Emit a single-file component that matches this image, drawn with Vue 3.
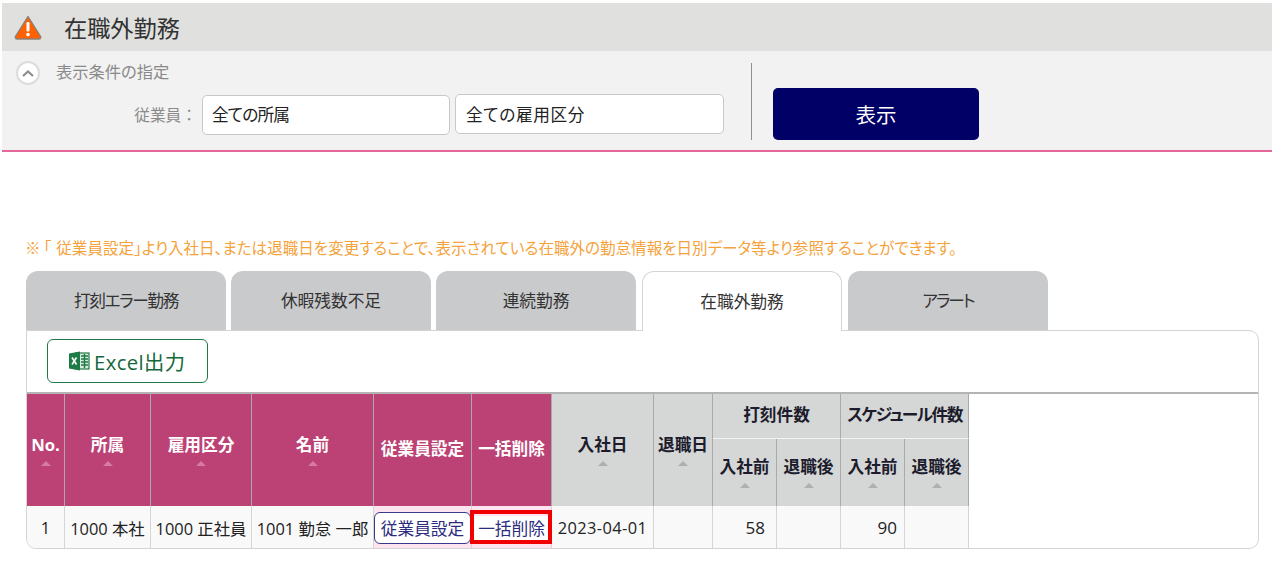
<script setup>
const tabs = [
  { label: '打刻エラー勤務', cls: 'tight' },
  { label: '休暇残数不足' },
  { label: '連続勤務' },
  { label: '在職外勤務', cls: 'active' },
  { label: 'アラート', cls: 'tighter' }
]
const pinkCols = ['No.', '所属', '雇用区分', '名前']
const subCols = ['入社前', '退職後', '入社前', '退職後']
</script>

<template>
  <div class="page">
    <header class="title-bar">
      <svg class="warn-icon" width="28" height="26" viewBox="0 0 28 26">
        <path d="M14 2.5 L26.6 22.5 Q27 25 24.8 25 L3.2 25 Q1 25 1.4 22.5 Z" fill="#ff6000" stroke="#8a8078" stroke-width="1.4" stroke-linejoin="round" />
        <rect x="12.5" y="8" width="3" height="9.5" rx="1.2" fill="#fff" />
        <circle cx="14" cy="20.6" r="1.8" fill="#fff" />
      </svg>
      <h1 class="title">在職外勤務</h1>
    </header>

    <section class="filter">
      <div class="filter-left">
        <div class="filter-head">
          <span class="collapse">
            <svg width="14" height="9" viewBox="0 0 14 9">
              <path d="M2 7 L7 2.5 L12 7" fill="none" stroke="#8d8d8d" stroke-width="2.2" />
            </svg>
          </span>
          <span class="filter-name">表示条件の指定</span>
        </div>
        <div class="filter-row">
          <span class="filter-label">従業員：</span>
          <div class="select select-a">全ての所属</div>
          <div class="select select-b">全ての雇用区分</div>
        </div>
      </div>
      <div class="divider"></div>
      <button class="show-btn">表示</button>
    </section>

    <p class="note"><span class="note-mark">※「</span>従業員設定」より入社日、または退職日を変更することで、表示されている在職外の勤怠情報を日別データ等より参照することができます。</p>

    <nav class="tabs">
      <div v-for="t in tabs" :key="t.label" class="tab" :class="t.cls">{{ t.label }}</div>
    </nav>

    <div class="panel">
      <button class="excel-btn">
        <svg width="22" height="20" viewBox="0 0 22 20">
          <rect x="8" y="2" width="13" height="16" fill="#d9ebdf" stroke="#1e7b45" stroke-width="1.2" />
          <path d="M13 5h7M13 8h7M13 11h7M13 14h7M16.5 3v14" stroke="#1e7b45" stroke-width="1.5" />
          <path d="M1 2.5 L12 0.5 V19.5 L1 17.5 Z" fill="#1e7b45" />
          <path d="M4 6.5 L8.5 13.5 M8.5 6.5 L4 13.5" stroke="#fff" stroke-width="1.6" />
        </svg>
        <span>Excel出力</span>
      </button>

      <div class="table-wrap">
        <table class="list">
          <colgroup>
            <col class="c1" /><col class="c2" /><col class="c3" /><col class="c4" /><col class="c5" /><col class="c6" />
            <col class="c7" /><col class="c8" /><col class="c9" /><col class="c9" /><col class="c9" /><col class="c9" />
          </colgroup>
          <thead>
            <tr class="row-top">
              <th v-for="c in pinkCols" :key="c" rowspan="2" class="pink">
                <div>{{ c }}</div>
                <i class="sort pink-sort"></i>
              </th>
              <th rowspan="2" class="pink">従業員設定</th>
              <th rowspan="2" class="pink">一括削除</th>
              <th rowspan="2" class="gray">
                <div>入社日</div>
                <i class="sort"></i>
              </th>
              <th rowspan="2" class="gray">
                <div>退職日</div>
                <i class="sort"></i>
              </th>
              <th colspan="2" class="gray group">打刻件数</th>
              <th colspan="2" class="gray group schedule">スケジュール件数</th>
            </tr>
            <tr class="row-sub">
              <th v-for="(c, i) in subCols" :key="i" class="gray">
                <div>{{ c }}</div>
                <i class="sort"></i>
              </th>
            </tr>
          </thead>
          <tbody>
            <tr class="row-body">
              <td class="center">1</td>
              <td class="center">1000 本社</td>
              <td class="center">1000 正社員</td>
              <td class="center">1001 勤怠 一郎</td>
              <td class="tint"><button class="link-btn">従業員設定</button></td>
              <td class="tint relative">
                <span class="plain-btn">一括削除</span>
                <span class="red-box"></span>
              </td>
              <td class="center date">2023-04-01</td>
              <td></td>
              <td class="num num-a">58</td>
              <td></td>
              <td class="num num-b">90</td>
              <td></td>
            </tr>
          </tbody>
        </table>
      </div>
    </div>
  </div>
</template>

<style>
body {
  margin: 0;
  background: #fff;
}
</style>

<style scoped>
.page {
  width: 1272px;
  height: 561px;
  overflow: hidden;
  font-family: "Open Sans", "Noto Sans CJK JP", sans-serif;
  font-feature-settings: "palt";
  color: #222;
  padding-top: 3px;
  box-sizing: border-box;
}

/* TITLE */
.title-bar {
  margin-left: 2px;
  height: 48px;
  background: #e0e0de;
  display: flex;
  align-items: center;
}
.warn-icon {
  margin-left: 12px;
}
.title {
  margin: 0 0 0 22px;
  font-size: 23.2px;
  font-weight: 400;
  color: #333;
}

/* FILTER */
.filter {
  margin-left: 2px;
  height: 99px;
  background: #f2f2f2;
  border-bottom: 2px solid #e4689a;
  display: flex;
  align-items: flex-start;
}
.filter-left {
  width: 749px;
}
.filter-head {
  display: flex;
  align-items: center;
  height: 24px;
  margin-top: 10px;
  padding-left: 14px;
}
.collapse {
  width: 20px;
  height: 20px;
  border: 2px solid #dcdcdc;
  border-radius: 50%;
  background: #fff;
  display: flex;
  align-items: center;
  justify-content: center;
}
.filter-name {
  margin: 0 0 4px 16px;
  font-size: 16.3px;
  color: #8a8a8a;
}
.filter-row {
  display: flex;
  align-items: center;
  margin-top: 9px;
}
.filter-label {
  width: 195px;
  text-align: right;
  font-feature-settings: normal;
  font-size: 15.7px;
  color: #8a8a8a;
}
.select {
  height: 40px;
  box-sizing: border-box;
  border: 1px solid #c8c8c8;
  border-radius: 5px;
  background: #fff;
  font-size: 16.7px;
  padding-left: 10px;
  color: #222;
}
.select-a {
  margin-left: 5px;
  width: 248px;
  margin-top: 1px;
  line-height: 38px;
  letter-spacing: -0.9px;
  padding-left: 9px;
}
.select-b {
  margin-left: 5px;
  width: 269px;
  margin-top: -1px;
  line-height: 40px;
  letter-spacing: 0.6px;
}
.divider {
  width: 1px;
  height: 77px;
  margin-top: 12px;
  background: #8f8f8f;
}
.show-btn {
  margin: 37px 0 0 21px;
  width: 206px;
  height: 52px;
  border: none;
  border-radius: 5px;
  background: #000066;
  color: #fff;
  font-family: inherit;
  font-feature-settings: inherit;
  font-size: 20.5px;
}

/* NOTE */
.note {
  margin: 84px 0 0 25px;
  height: 24px;
  line-height: 24px;
  font-size: 15.55px;
  color: #f5a23c;
  white-space: nowrap;
}
.note-mark {
  letter-spacing: 3px;
  margin-right: 2px;
}

/* TABS */
.tabs {
  display: flex;
  gap: 5px;
  margin: 11px 0 0 26px;
  height: 59px;
}
.tab {
  width: 200px;
  height: 59px;
  box-sizing: border-box;
  background: #c9cacc;
  border-radius: 12px 12px 0 0;
  text-align: center;
  font-size: 16.7px;
  line-height: 60px;
  color: #333;
}
.tab.tight {
  letter-spacing: -1.4px;
}
.tab.tighter {
  letter-spacing: -2px;
}
.tab.active {
  margin: 0 1px;
  height: 60px;
  background: #fff;
  border: 1px solid #d4d4d4;
  border-bottom: none;
  position: relative;
  z-index: 1;
}

/* PANEL */
.panel {
  margin-left: 26px;
  width: 1233px;
  height: 219px;
  box-sizing: border-box;
  background: #fff;
  border: 1px solid #d4d4d4;
  border-radius: 0 10px 10px 10px;
  overflow: hidden;
}
.excel-btn {
  display: flex;
  align-items: center;
  gap: 4px;
  width: 161px;
  height: 44px;
  box-sizing: border-box;
  margin: 8px 0 9px 20px;
  padding: 0 0 0 20px;
  background: #fff;
  border: 1px solid #1e7b45;
  border-radius: 6px;
  color: #14683a;
  font-family: inherit;
  font-feature-settings: inherit;
  font-size: 20.3px;
  letter-spacing: 0.4px;
}

/* TABLE */
.table-wrap {
  border-top: 2px solid #b4b4b4;
}
.list {
  border-collapse: separate;
  border-spacing: 0;
  table-layout: fixed;
  width: 942px;
}
.c1 { width: 38px; }
.c2 { width: 86px; }
.c3 { width: 101px; }
.c4 { width: 122px; }
.c5 { width: 98px; }
.c6 { width: 80px; }
.c7 { width: 102px; }
.c8 { width: 59px; }
.c9 { width: 64px; }

.row-top { height: 45px; }
.row-sub { height: 67px; }
.row-body { height: 43px; }

th {
  padding: 0 0 2px;
  box-sizing: border-box;
  font-size: 16.7px;
  font-weight: 700;
  text-align: center;
  vertical-align: middle;
  white-space: nowrap;
  line-height: 24px;
  border-right: 1px solid #a9abab;
}
th.pink {
  background: #bc4174;
  color: #fff;
}
th.gray {
  background: #d5d7d7;
  color: #1c1c2c;
}
th.group {
  border-bottom: 1px solid #f2f2f2;
}
th.schedule {
  letter-spacing: -1.5px;
}
.sort {
  display: block;
  width: 0;
  height: 0;
  margin: 4px auto 0;
  border-left: 5px solid transparent;
  border-right: 5px solid transparent;
  border-bottom: 5px solid #adb0b0;
}
.pink-sort {
  border-bottom-color: #d67c9f;
}
td {
  padding: 0;
  background: #f9f9f9;
  border-right: 1px solid #d5d5d5;
  font-size: 16.4px;
  color: #222;
  white-space: nowrap;
  overflow: visible;
}
.center {
  text-align: center;
}
.date {
  letter-spacing: 0.4px;
}
.num {
  text-align: right;
  font-size: 17px;
}
.num-a { padding-right: 11px; }
.num-b { padding-right: 7px; }
td.tint {
  background: #fde4ee;
  text-align: center;
}
.relative {
  position: relative;
}
.link-btn {
  width: 97px;
  height: 32px;
  padding: 0;
  box-sizing: border-box;
  background: #fff;
  border: 1px solid #3a3a8c;
  border-radius: 6px;
  color: #2b2b80;
  font-family: inherit;
  font-feature-settings: inherit;
  font-size: 16.7px;
}
.plain-btn {
  display: flex;
  align-items: center;
  justify-content: center;
  height: 100%;
  background: #fff;
  color: #2b2b80;
  font-size: 16.7px;
}
.red-box {
  position: absolute;
  left: -2px;
  top: 4px;
  width: 82px;
  height: 34px;
  box-sizing: border-box;
  border: 4px solid #f00000;
}
</style>
